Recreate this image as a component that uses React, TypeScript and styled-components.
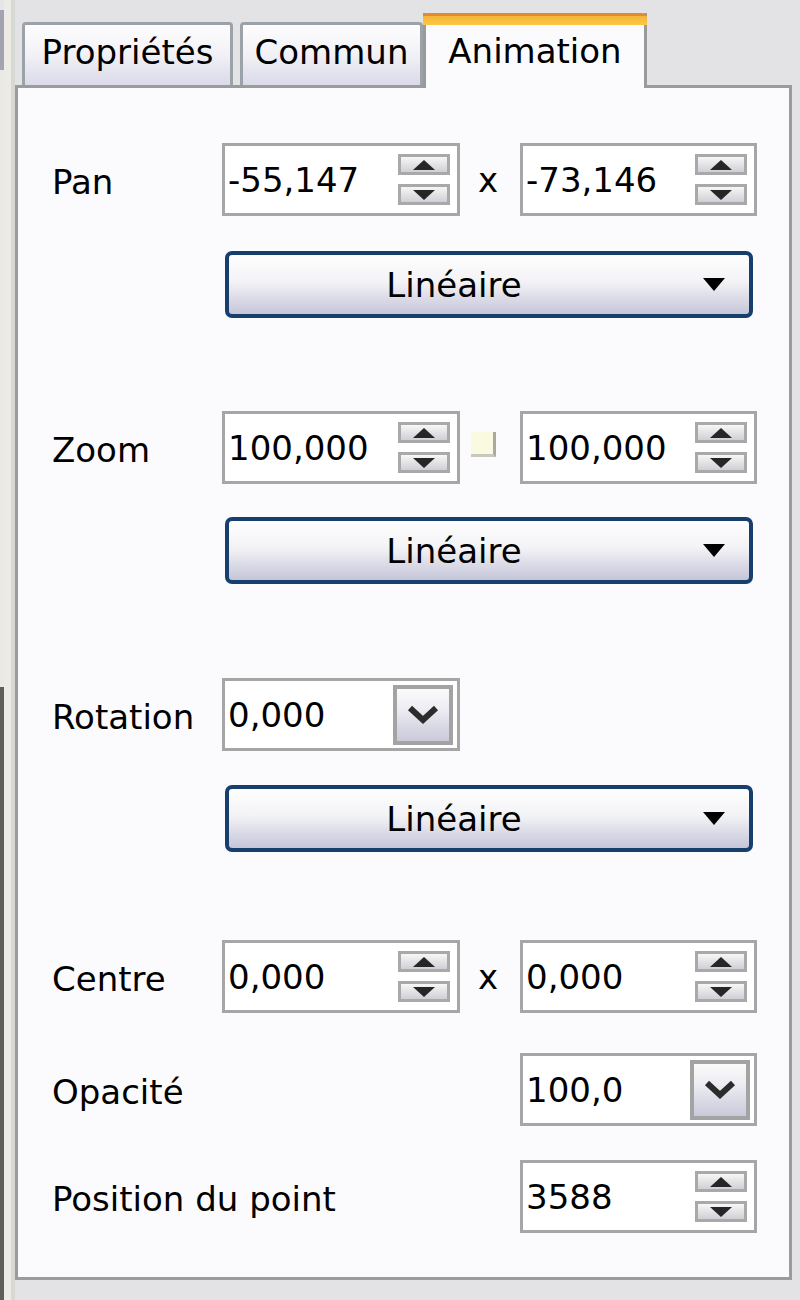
import React from "react";
import styled, { createGlobalStyle } from "styled-components";

const GlobalStyle = createGlobalStyle`
  html, body { margin: 0; padding: 0; background: #e3e3e6; }
  body {
    font-family: "DejaVu Sans", Verdana, sans-serif;
    font-size: 34px;
    color: #000;
  }
  * { box-sizing: border-box; }
`;

const Screen = styled.div`
  width: 800px;
  height: 1300px;
  display: flex;
  background: #e3e3e6;
  overflow: hidden;
`;

const LeftEdge = styled.div`
  width: 15px;
  flex-shrink: 0;
  display: flex;
  flex-direction: column;
`;

const EdgeSegment = styled.div<{ $h?: number; $tone: string }>`
  height: ${(p) => (p.$h ? `${p.$h}px` : "auto")};
  flex: ${(p) => (p.$h ? "0 0 auto" : "1")};
  background: linear-gradient(
    to right,
    ${(p) => p.$tone} 0 4px,
    #ecebe5 4px 11px,
    #d9d9d3 11px 15px
  );
`;

const Main = styled.div`
  width: 777px;
  height: 1280px;
  flex-shrink: 0;
  display: flex;
  flex-direction: column;
`;

const TabStrip = styled.div`
  height: 88px;
  flex-shrink: 0;
  border-bottom: 3px solid #9b9b9b;
  display: flex;
  align-items: flex-end;
  padding-left: 7px;
`;

const Tab = styled.div<{ $w: number; $gap?: number }>`
  width: ${(p) => p.$w}px;
  height: 63px;
  margin-right: ${(p) => p.$gap ?? 0}px;
  border: 3px solid #9ca3a8;
  border-bottom: none;
  border-radius: 4px 4px 0 0;
  background: linear-gradient(#fdfdfd 0%, #f3f3f7 45%, #dadaea 100%);
  text-align: center;
  line-height: 40px;
  padding-top: 7px;
  white-space: nowrap;
`;

const ActiveTab = styled.div<{ $w: number }>`
  width: ${(p) => p.$w}px;
  height: 75px;
  margin-bottom: -3px;
  border-left: 3px solid #9a9a9a;
  border-right: 3px solid #9a9a9a;
  background: #fbfbfd;
  text-align: center;
  line-height: 40px;
  white-space: nowrap;
  display: flex;
  flex-direction: column;
`;

const TabHighlight = styled.div`
  flex: 0 0 12px;
  height: 12px;
  margin: 0 -3px 6px;
  border-radius: 5px 5px 0 0;
  background: linear-gradient(#e38a2c 0 3px, #f5b43a 3px, #fcc846 100%);
`;

const Panel = styled.div`
  flex: 1;
  background: #fbfbfd;
  border: 3px solid #9b9b9b;
  border-top: none;
  padding: 55px 0 0 34px;
  display: flex;
  flex-direction: column;
`;

const Row = styled.div<{ $top?: number; $h?: number }>`
  display: grid;
  grid-template-columns: 170px 238px 60px 237px;
  align-items: center;
  height: ${(p) => p.$h ?? 73}px;
  margin-top: ${(p) => p.$top ?? 0}px;
`;

const Label = styled.span`
  grid-column: 1;
  line-height: 40px;
  padding-top: 4px;
  white-space: nowrap;
`;

const Field = styled.div<{ $col?: number }>`
  grid-column: ${(p) => p.$col ?? 2};
  height: 73px;
  border: 3px solid #a6a6a6;
  background: #ffffff;
  display: flex;
  align-items: center;
  padding: 0 4px 0 3px;
`;

const FieldText = styled.span`
  flex: 1;
  line-height: 40px;
  white-space: nowrap;
`;

const Spinner = styled.div`
  width: 52px;
  margin-right: 3px;
  display: flex;
  flex-direction: column;
  gap: 9px;
`;

const SpinButton = styled.div`
  height: 21px;
  border: 3px solid #a9a9a9;
  background: linear-gradient(#f7f7f7, #cfcfd6);
  display: flex;
  align-items: center;
  justify-content: center;
`;

const DropButton = styled.div`
  width: 60px;
  height: 60px;
  border: 4px solid #a3a3a3;
  background: linear-gradient(#fbfbfb 0%, #ececf2 40%, #c9c9da 100%);
  display: flex;
  align-items: center;
  justify-content: center;
`;

const Separator = styled.div`
  grid-column: 3;
  display: flex;
  justify-content: center;
  padding-right: 4px;
  line-height: 40px;
`;

const LinkSwatch = styled.div`
  width: 25px;
  height: 25px;
  margin: 0 10px 7px 0;
  background: #fafae0;
  border-right: 3px solid #aaa9a0;
  border-bottom: 3px solid #c8c8bc;
`;

const Select = styled.div`
  grid-column: 2 / 5;
  margin: 0 4px 0 3px;
  height: 67px;
  border: 4px solid #163f6e;
  border-radius: 7px;
  background: linear-gradient(#fefefe 0%, #f3f3f6 45%, #c5c5d9 100%);
  display: flex;
  align-items: center;
`;

const SelectText = styled.span`
  flex: 1;
  text-align: center;
  line-height: 40px;
`;

const SelectArrow = styled.span`
  width: 70px;
  display: flex;
  justify-content: center;
`;

const Triangle = ({ up }: { up?: boolean }) => (
  <svg width="22" height="10" viewBox="0 0 22 10">
    <polygon
      points={up ? "11,0 22,10 0,10" : "0,0 22,0 11,10"}
      fill="#262626"
    />
  </svg>
);

const Spin = () => (
  <Spinner>
    <SpinButton>
      <Triangle up />
    </SpinButton>
    <SpinButton>
      <Triangle />
    </SpinButton>
  </Spinner>
);

const Chevron = () => (
  <DropButton>
    <svg width="32" height="22" viewBox="0 0 32 22">
      <polyline
        points="3,4 16,16 29,4"
        fill="none"
        stroke="#2c2c2c"
        strokeWidth="6"
      />
    </svg>
  </DropButton>
);

const EaseSelect = ({ top }: { top: number }) => (
  <Row $top={top} $h={67}>
    <Select>
      <SelectText>Linéaire</SelectText>
      <SelectArrow>
        <svg width="22" height="13" viewBox="0 0 22 13">
          <polygon points="0,0 22,0 11,13" fill="#000" />
        </svg>
      </SelectArrow>
    </Select>
  </Row>
);

export default function App() {
  return (
    <>
      <GlobalStyle />
      <Screen>
        <LeftEdge>
          <EdgeSegment $h={10} $tone="#e6e6ea" />
          <EdgeSegment $h={60} $tone="#a3a3b2" />
          <EdgeSegment $h={617} $tone="#e9e9e5" />
          <EdgeSegment $tone="#5d5f58" />
        </LeftEdge>
        <Main>
          <TabStrip>
            <Tab $w={211} $gap={7}>Propriétés</Tab>
            <Tab $w={183}>Commun</Tab>
            <ActiveTab $w={224}>
              <TabHighlight />
              Animation
            </ActiveTab>
          </TabStrip>
          <Panel>
            <Row>
              <Label>Pan</Label>
              <Field>
                <FieldText>-55,147</FieldText>
                <Spin />
              </Field>
              <Separator>x</Separator>
              <Field $col={4}>
                <FieldText>-73,146</FieldText>
                <Spin />
              </Field>
            </Row>
            <EaseSelect top={35} />

            <Row $top={93}>
              <Label>Zoom</Label>
              <Field>
                <FieldText>100,000</FieldText>
                <Spin />
              </Field>
              <Separator>
                <LinkSwatch />
              </Separator>
              <Field $col={4}>
                <FieldText>100,000</FieldText>
                <Spin />
              </Field>
            </Row>
            <EaseSelect top={33} />

            <Row $top={94}>
              <Label>Rotation</Label>
              <Field>
                <FieldText>0,000</FieldText>
                <Chevron />
              </Field>
            </Row>
            <EaseSelect top={34} />

            <Row $top={88}>
              <Label>Centre</Label>
              <Field>
                <FieldText>0,000</FieldText>
                <Spin />
              </Field>
              <Separator>x</Separator>
              <Field $col={4}>
                <FieldText>0,000</FieldText>
                <Spin />
              </Field>
            </Row>

            <Row $top={40}>
              <Label>Opacité</Label>
              <Field $col={4}>
                <FieldText>100,0</FieldText>
                <Chevron />
              </Field>
            </Row>

            <Row $top={34}>
              <Label>Position du point</Label>
              <Field $col={4}>
                <FieldText>3588</FieldText>
                <Spin />
              </Field>
            </Row>
          </Panel>
        </Main>
      </Screen>
    </>
  );
}
